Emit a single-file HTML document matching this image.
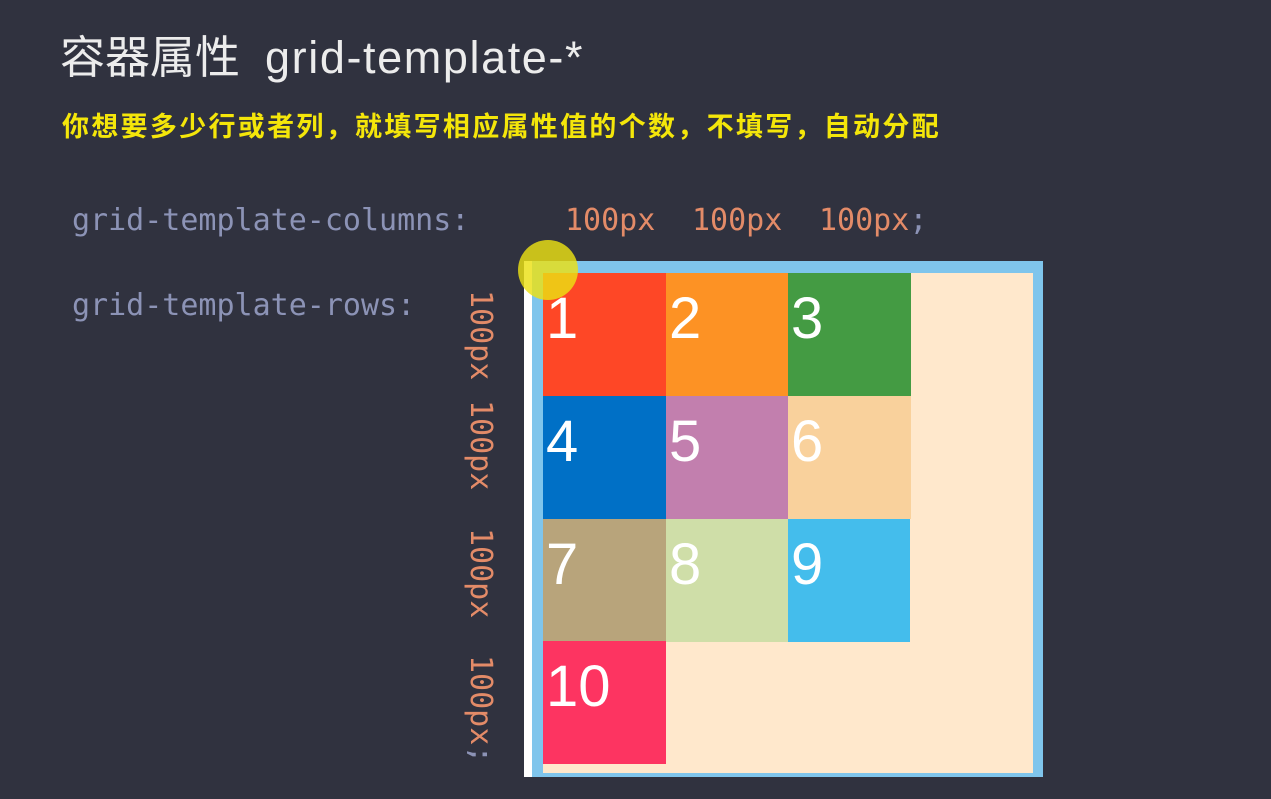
<!DOCTYPE html>
<html><head><meta charset="utf-8"><style>
html,body{margin:0;padding:0;}
body{width:1271px;height:799px;background:#30323f;position:relative;overflow:hidden;font-family:"Liberation Sans","Noto Sans CJK SC",sans-serif;}
.abs{position:absolute;white-space:nowrap;}
.title{left:60px;top:28px;font-size:45px;color:#ececec;line-height:60px;}
.sub{left:62px;top:110px;font-size:27px;font-weight:bold;color:#f4e60a;line-height:34px;letter-spacing:2.3px;}
.mono{font-family:"DejaVu Sans Mono","Liberation Mono",monospace;font-size:30px;line-height:34px;}
.prop{color:#8c93b6;}
.val{color:#e38b68;}
.rot{transform-origin:0 0;transform:rotate(90deg);}
.c{position:absolute;width:123px;height:123px;color:#fff;font-family:"Liberation Sans",sans-serif;font-size:58px;line-height:92px;text-indent:3px;}
</style></head><body>
<div class="abs title">容器属性 &nbsp;<span style="letter-spacing:1.6px">grid-template-*</span></div>
<div class="abs sub">你想要多少行或者列，就填写相应属性值的个数，不填写，自动分配</div>
<div class="abs mono prop" style="left:72px;top:204px;">grid-template-columns:</div>
<div class="abs mono val" style="left:565px;top:204px;">100px</div>
<div class="abs mono val" style="left:692px;top:204px;">100px</div>
<div class="abs mono val" style="left:819px;top:204px;">100px<span class="prop">;</span></div>
<div class="abs mono prop" style="left:72px;top:289px;">grid-template-rows:</div>
<div class="abs mono val rot" style="left:497px;top:290px;">100px</div>
<div class="abs mono val rot" style="left:497px;top:400px;">100px</div>
<div class="abs mono val rot" style="left:497px;top:528px;">100px</div>
<div class="abs mono val rot" style="left:497px;top:655px;">100px<span class="prop">;</span></div>

<div class="abs" style="left:524px;top:261px;width:8px;height:516px;background:#fff;"></div>
<div class="abs" style="left:532px;top:261px;width:511px;height:516px;background:#7fc5ec;"></div>
<div class="abs" style="left:543px;top:273px;width:490px;height:500px;background:#ffe8cc;"></div>
<div class="c" style="left:543px;top:273px;background:#fe4726;">1</div>
<div class="c" style="left:666px;top:273px;background:#fd9224;">2</div>
<div class="c" style="left:788px;top:273px;background:#449b43;">3</div>
<div class="c" style="left:543px;top:396px;background:#0070c6;">4</div>
<div class="c" style="left:666px;top:396px;background:#c27fae;">5</div>
<div class="c" style="left:788px;top:396px;background:#f9d19c;">6</div>
<div class="c" style="left:543px;top:519px;background:#b8a47b;">7</div>
<div class="c" style="left:666px;top:519px;background:#cfdea8;">8</div>
<div class="c" style="left:788px;top:519px;background:#44bdec;width:122px;">9</div>
<div class="c" style="left:543px;top:641px;background:#fd3461;">10</div>
<div class="abs" style="left:518px;top:240px;width:60px;height:60px;border-radius:50%;background:rgba(235,225,20,0.82);"></div>
</body></html>
